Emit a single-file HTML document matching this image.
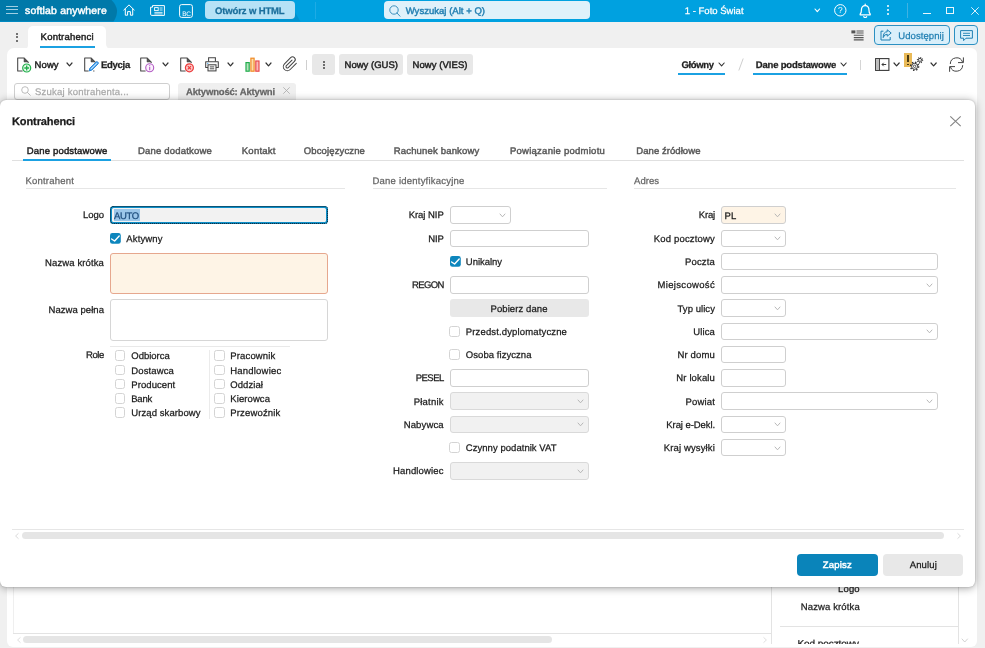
<!DOCTYPE html><html lang="pl"><head><meta charset="utf-8"><title>Kontrahenci</title><style>
*{box-sizing:border-box;margin:0;padding:0}
html,body{width:985px;height:648px;overflow:hidden;background:#f0f0f0}
body{font-family:"Liberation Sans",sans-serif;font-size:10px;line-height:12px;color:#222;letter-spacing:-0.1px;position:relative;text-rendering:geometricPrecision}
#root{position:absolute;left:0;top:0;width:985px;height:648px;overflow:hidden;will-change:transform;-webkit-font-smoothing:antialiased}
.a{position:absolute}
.t{position:absolute;white-space:nowrap;line-height:12px;-webkit-text-stroke:0.25px currentColor}
.m{-webkit-text-stroke:0.45px currentColor}
.b{font-weight:700}
.r{text-align:right}
.inp{position:absolute;border:1px solid #cfcfcf;border-radius:3px;background:#fff;height:18px}
.dis{background:#f1f1f1;border-color:#d9d9d9}
.cb{position:absolute;width:11px;height:11px;border:1px solid #d4d4d4;border-radius:2.5px;background:#fff}
.cbc{position:absolute;width:11px;height:11px;border-radius:2px;background:#0d86bd}
.btn{position:absolute;background:#e8e8e8;border-radius:3px}
svg{position:absolute;overflow:visible}
.ln{position:absolute;height:1px;background:#e3e3e3}
</style></head><body><div id="root">
<div class="a" style="left:0;top:0;width:985px;height:21.5px;background:#00a1e0"></div>
<svg style="left:0;top:0" width="302" height="21.5" viewBox="0 0 302 21.5"><path d="M0 0 H293 V9 L300.5 21.5 H0 Z" fill="#0093cf"/></svg>
<svg style="left:0;top:0" width="120" height="21.5" viewBox="0 0 120 21.5"><path d="M0 0 H111.5 Q116.5 5 117 10.5 Q117.3 16 113.5 21.5 H0 Z" fill="#0079a9"/></svg>
<div class="a" style="left:5.5px;top:5.7px;width:12px;height:1.2px;background:#9fcfe3"></div>
<div class="a" style="left:5.5px;top:9.200000000000001px;width:12px;height:1.2px;background:#9fcfe3"></div>
<div class="a" style="left:5.5px;top:12.6px;width:12px;height:1.2px;background:#9fcfe3"></div>
<div class="t m" style="top:6px;left:25.00px;font-size:10.45px;letter-spacing:0.196px;color:#fff;">softlab anywhere</div>
<svg style="left:123px;top:4px" width="12" height="12" viewBox="0 0 12 12"><path d="M0.8 6 L6 0.9 L11.2 6 M2.3 5 V11.2 H4.6 V7.6 H7.4 V11.2 H9.7 V5" fill="none" stroke="#fff" stroke-width="1" stroke-linejoin="round" stroke-linecap="round"/></svg>
<svg style="left:150px;top:5px" width="15" height="11" viewBox="0 0 15 11"><path d="M2.5 0.6 H14.4 V10.4 H1.8 Q0.6 10.4 0.6 9.2 V2.2 H2.5 Z" fill="none" stroke="#fff" stroke-width="1"/><rect x="4.6" y="2.6" width="3.6" height="3" fill="none" stroke="#fff" stroke-width="0.9"/><path d="M9.6 3 H12.6 M9.6 5 H12.6 M4.4 7.4 H12.6 M4.4 8.9 H12.6" stroke="#fff" stroke-width="0.8"/></svg>
<svg style="left:179px;top:4px" width="14" height="14" viewBox="0 0 14 14"><rect x="0.6" y="0.6" width="12.8" height="12.8" rx="2" fill="none" stroke="#fff" stroke-width="1"/><text x="3.2" y="11.5" font-size="6.5" fill="#fff" font-family="Liberation Sans, sans-serif" letter-spacing="-0.3">BC</text></svg>
<div class="a" style="left:205px;top:1px;width:89.6px;height:18px;background:#b6e2f6;border-radius:4px"></div>
<div class="t b" style="top:6px;left:215.00px;font-size:9.5px;letter-spacing:-0.132px;color:#1b6f9c;">Otwórz w HTML</div>
<div class="a" style="left:315px;top:2px;width:1px;height:17px;background:#1eabe5"></div>
<div class="a" style="left:384px;top:1px;width:206px;height:18px;background:#dff1fa;border-radius:4px"></div>
<svg style="left:389px;top:4.5px" width="12" height="12" viewBox="0 0 12 12"><circle cx="5" cy="5" r="4.2" fill="none" stroke="#2a86b5" stroke-width="0.9"/><path d="M8 8 L11 11.2" stroke="#2a86b5" stroke-width="0.9" stroke-linecap="round"/></svg>
<div class="t m" style="top:6px;left:405.70px;font-size:9.5px;letter-spacing:0.030px;color:#2581b3;">Wyszukaj (Alt + Q)</div>
<div class="t " style="top:6px;left:684.70px;font-size:9.5px;letter-spacing:0.021px;color:#fff;">1 - Foto Świat</div>
<svg style="left:814.70px;top:9.05px" width="4.6" height="2.7" viewBox="0 0 4.6 2.7"><path d="M0 0 L2.3 2.7 L4.6 0" fill="none" stroke="#fff" stroke-width="1.15" stroke-linecap="round" stroke-linejoin="round"/></svg>
<svg style="left:834.2px;top:4.2px" width="12.6" height="12.6" viewBox="0 0 12.6 12.6"><circle cx="6.3" cy="6.3" r="5.7" fill="none" stroke="#fff" stroke-width="1"/><text x="3.9" y="9.4" font-size="8.4" fill="#fff" font-family="Liberation Sans, sans-serif">?</text></svg>
<svg style="left:859.3px;top:2.6px" width="12.4" height="16.8" viewBox="0 0 11 15"><path d="M1 10.6 H10 V9.8 Q8.9 9 8.9 6.4 Q8.9 2.4 5.5 2.4 Q2.1 2.4 2.1 6.4 Q2.1 9 1 9.8 Z" fill="none" stroke="#fff" stroke-width="1.1" stroke-linejoin="round"/><path d="M5.5 2.2 V1" stroke="#fff" stroke-width="1.1" stroke-linecap="round"/><path d="M4.2 12.3 Q5.5 13.6 6.8 12.3" fill="none" stroke="#fff" stroke-width="1.1" stroke-linecap="round"/></svg>
<div class="a" style="left:887.3px;top:5.199999999999999px;width:2.2px;height:2.2px;border-radius:1.1px;background:#fff"></div>
<div class="a" style="left:887.3px;top:9.200000000000001px;width:2.2px;height:2.2px;border-radius:1.1px;background:#fff"></div>
<div class="a" style="left:887.3px;top:13.200000000000001px;width:2.2px;height:2.2px;border-radius:1.1px;background:#fff"></div>
<div class="a" style="left:906.5px;top:3px;width:1px;height:15px;background:#3fb2e3"></div>
<div class="a" style="left:922.5px;top:12.6px;width:8px;height:1px;background:#e8f6fc"></div>
<div class="a" style="left:946px;top:6.5px;width:8px;height:7.5px;border:1px solid #e8f6fc"></div>
<svg style="left:971px;top:6.5px" width="8" height="8" viewBox="0 0 8 8"><path d="M0.3 0.3 L7.7 7.7 M7.7 0.3 L0.3 7.7" stroke="#e8f6fc" stroke-width="0.95"/></svg>
<div class="a" style="left:15.6px;top:32.6px;width:2px;height:2px;border-radius:1px;background:#4a4a4a"></div>
<div class="a" style="left:15.6px;top:36.25px;width:2px;height:2px;border-radius:1px;background:#4a4a4a"></div>
<div class="a" style="left:15.6px;top:39.9px;width:2px;height:2px;border-radius:1px;background:#4a4a4a"></div>
<div class="a" style="left:28px;top:25.5px;width:78px;height:23px;background:#fff;border-radius:5px 5px 0 0"></div>
<div class="a" style="left:106px;top:43px;width:6px;height:6px;background:#fff"></div><div class="a" style="left:106px;top:38px;width:12px;height:10.6px;background:#f0f0f0;border-radius:0 0 0 5px"></div>
<div class="a" style="left:23px;top:44px;width:5px;height:5px;background:#fff"></div><div class="a" style="left:20px;top:43px;width:8px;height:5.6px;background:#f0f0f0;border-radius:0 0 4px 0"></div>
<div class="t m" style="top:32px;left:40.60px;font-size:9.5px;letter-spacing:0.243px;color:#222;">Kontrahenci</div>
<div class="a" style="left:39.5px;top:45.7px;width:55.5px;height:2px;background:#1ba1e2"></div>
<svg style="left:851px;top:29.5px" width="13" height="11" viewBox="0 0 13 11"><rect x="0.4" y="0.4" width="4" height="3" fill="#555"/><path d="M5.5 1 H12.6 M5.5 3 H12.6 M2.8 5.3 H12.6 M2.8 7.6 H12.6 M2.8 9.9 H12.6" stroke="#555" stroke-width="1.1"/></svg>
<div class="a" style="left:873.7px;top:25px;width:76.2px;height:19.8px;background:#d9effa;border:1px solid #2b90c2;border-radius:4px"></div>
<svg style="left:879.5px;top:29px" width="12" height="12" viewBox="0 0 12 12"><path d="M3.4 2.2 H1 V11 H10.2 V8" fill="none" stroke="#1f7fb2" stroke-width="1"/><path d="M7.2 0.8 L11.2 4 L7.2 7.2 V5.2 Q4.2 5.2 3.2 8.6 Q3.2 2.8 7.2 2.8 Z" fill="none" stroke="#1f7fb2" stroke-width="1" stroke-linejoin="round"/></svg>
<div class="t " style="top:31px;left:898.30px;font-size:9.5px;letter-spacing:0.067px;color:#1f7fb2;">Udostępnij</div>
<div class="a" style="left:954.2px;top:25px;width:23.6px;height:19.8px;background:#d9effa;border:1px solid #2b90c2;border-radius:4px"></div>
<svg style="left:959.5px;top:29.5px" width="13" height="12" viewBox="0 0 13 12"><path d="M0.6 0.6 H12.4 V8.2 H6 L3.6 10.6 V8.2 H0.6 Z" fill="none" stroke="#1f7fb2" stroke-width="1" stroke-linejoin="round"/><path d="M3 3.3 H10 M3 5.5 H10" stroke="#1f7fb2" stroke-width="0.9"/></svg>
<div class="a" style="left:7px;top:48.3px;width:970.2px;height:598.3px;background:#fff;border-radius:7px 6px 6px 6px"></div>
<svg style="left:16.8px;top:56.8px" width="16" height="16" viewBox="0 0 16 16"><path d="M5.6 13.9 H0.7 V0.9 H7 L11.2 5.1 V6" fill="none" stroke="#444" stroke-width="1.05" stroke-linejoin="round"/><path d="M7 1.2 V5 H10.8 Z" fill="#555" stroke="#444" stroke-width="0.5" stroke-linejoin="round"/><circle cx="9.7" cy="11" r="4" fill="#e9f8ec" stroke="#21b04b" stroke-width="1.2"/><path d="M9.7 8.6 V13.4 M7.3 11 H12.1" stroke="#21b04b" stroke-width="1.3"/></svg>
<div class="t m" style="top:60px;left:34.50px;font-size:9.5px;letter-spacing:0.122px;color:#222;">Nowy</div>
<svg style="left:67.00px;top:63.00px" width="5" height="2.8" viewBox="0 0 5 2.8"><path d="M0 0 L2.5 2.8 L5 0" fill="none" stroke="#333" stroke-width="1.2" stroke-linecap="round" stroke-linejoin="round"/></svg>
<svg style="left:83.8px;top:56.8px" width="16" height="16" viewBox="0 0 16 16"><path d="M4.6 13.9 H0.7 V0.9 H7 L11.2 5.1 V5.6 M9.2 13.9 H10.4" fill="none" stroke="#444" stroke-width="1.05" stroke-linejoin="round"/><path d="M7 1.2 V5 H10.8 Z" fill="#555" stroke="#444" stroke-width="0.5" stroke-linejoin="round"/><path d="M5.2 13.9 L5.9 11.2 L12.2 4.9 Q12.9 4.3 13.6 4.9 L14.1 5.4 Q14.7 6.1 14.1 6.8 L7.8 13.1 Z" fill="#5fb0f0" stroke="#2583da" stroke-width="1" stroke-linejoin="round"/><path d="M7 12 L12.8 6.2" stroke="#d7ecff" stroke-width="0.8"/></svg>
<div class="t b" style="top:60px;left:101.00px;font-size:9.5px;letter-spacing:-0.272px;color:#222;">Edycja</div>
<svg style="left:139.8px;top:56.8px" width="16" height="16" viewBox="0 0 16 16"><path d="M5.6 13.9 H0.7 V0.9 H7 L11.2 5.1 V6" fill="none" stroke="#444" stroke-width="1.05" stroke-linejoin="round"/><path d="M7 1.2 V5 H10.8 Z" fill="#555" stroke="#444" stroke-width="0.5" stroke-linejoin="round"/><circle cx="9.7" cy="10.8" r="4" fill="#fbf0fd" stroke="#b35cc4" stroke-width="1.1"/><path d="M9.7 8.3 V9.2 M9.7 10 V13.3" stroke="#b35cc4" stroke-width="1.1"/></svg>
<svg style="left:162.60px;top:63.00px" width="5" height="2.8" viewBox="0 0 5 2.8"><path d="M0 0 L2.5 2.8 L5 0" fill="none" stroke="#333" stroke-width="1.2" stroke-linecap="round" stroke-linejoin="round"/></svg>
<svg style="left:179.7px;top:56.8px" width="16" height="16" viewBox="0 0 16 16"><path d="M5.6 13.9 H0.7 V0.9 H7 L11.2 5.1 V6" fill="none" stroke="#444" stroke-width="1.05" stroke-linejoin="round"/><path d="M7 1.2 V5 H10.8 Z" fill="#555" stroke="#444" stroke-width="0.5" stroke-linejoin="round"/><circle cx="9.4" cy="10.8" r="4" fill="#fcc9c9" stroke="#ec3b3b" stroke-width="1.2"/><path d="M7.8 9.2 L11 12.4 M11 9.2 L7.8 12.4" stroke="#ec3b3b" stroke-width="1.2"/></svg>
<svg style="left:205px;top:57.2px" width="14" height="14.6" viewBox="0 0 14 14.6"><path d="M3.6 4.6 V0.7 H10.4 V4.6" fill="none" stroke="#444" stroke-width="1.05"/><path d="M3 10.6 H0.7 V4.8 H13.3 V10.6 H11" fill="none" stroke="#444" stroke-width="1.05" stroke-linejoin="round"/><rect x="3" y="7.8" width="8" height="6.1" fill="#fff" stroke="#444" stroke-width="1.05"/><path d="M4.8 9.9 H9.2 M4.8 11.8 H9.2" stroke="#3a3a3a" stroke-width="0.9"/><rect x="2" y="5.8" width="1.4" height="1.2" fill="#6bb8f0"/></svg>
<svg style="left:227.50px;top:63.00px" width="5" height="2.8" viewBox="0 0 5 2.8"><path d="M0 0 L2.5 2.8 L5 0" fill="none" stroke="#333" stroke-width="1.2" stroke-linecap="round" stroke-linejoin="round"/></svg>
<svg style="left:245.4px;top:57px" width="15.2" height="15" viewBox="0 0 15.2 15"><rect x="1" y="5.6" width="3.2" height="8.6" fill="#b7e3c0" stroke="#22ad4c" stroke-width="1.2"/><rect x="5.9" y="1.2" width="3.2" height="13" fill="#fcdcaa" stroke="#f08a24" stroke-width="1.2"/><rect x="10.8" y="4" width="3.2" height="10.2" fill="#f9b9b9" stroke="#ea4a4a" stroke-width="1.2"/></svg>
<svg style="left:265.50px;top:63.00px" width="5" height="2.8" viewBox="0 0 5 2.8"><path d="M0 0 L2.5 2.8 L5 0" fill="none" stroke="#333" stroke-width="1.2" stroke-linecap="round" stroke-linejoin="round"/></svg>
<svg style="left:281.6px;top:56.4px" width="16" height="16" viewBox="0 0 24 24"><path d="M21.44 11.05l-9.19 9.19a6 6 0 0 1-8.49-8.49l9.19-9.19a4 4 0 0 1 5.66 5.66l-9.2 9.19a2 2 0 0 1-2.83-2.83l8.49-8.48" fill="none" stroke="#444" stroke-width="1.55" stroke-linecap="round" stroke-linejoin="round"/></svg>
<div class="a" style="left:305.8px;top:60px;width:1px;height:9.5px;background:#cfcfcf"></div>
<div class="btn" style="left:312px;top:54px;width:23px;height:21px"></div>
<div class="a" style="left:322.5px;top:60.5px;width:2px;height:2px;border-radius:1px;background:#444"></div>
<div class="a" style="left:322.5px;top:63.900000000000006px;width:2px;height:2px;border-radius:1px;background:#444"></div>
<div class="a" style="left:322.5px;top:67.3px;width:2px;height:2px;border-radius:1px;background:#444"></div>
<div class="btn" style="left:339px;top:54px;width:64.3px;height:21px"></div>
<div class="t m" style="top:60px;left:344.50px;font-size:9.5px;letter-spacing:0.021px;color:#222;">Nowy (GUS)</div>
<div class="btn" style="left:407.3px;top:54px;width:65.7px;height:21px"></div>
<div class="t m" style="top:60px;left:412.50px;font-size:9.5px;letter-spacing:0.060px;color:#222;">Nowy (VIES)</div>
<div class="t b" style="top:60px;left:681.50px;font-size:9.5px;letter-spacing:-0.378px;color:#222;">Główny</div>
<svg style="left:718.60px;top:62.85px" width="5.2" height="2.9" viewBox="0 0 5.2 2.9"><path d="M0 0 L2.6 2.9 L5.2 0" fill="none" stroke="#333" stroke-width="1.1" stroke-linecap="round" stroke-linejoin="round"/></svg>
<div class="a" style="left:678px;top:73.2px;width:47px;height:1.6px;background:#1ba1e2"></div>
<svg style="left:737.5px;top:58px" width="6" height="13" viewBox="0 0 6 13"><path d="M5.2 0.5 L0.8 12.5" stroke="#c8c8c8" stroke-width="0.9"/></svg>
<div class="t b" style="top:60px;left:755.70px;font-size:9.5px;letter-spacing:-0.168px;color:#222;">Dane podstawowe</div>
<svg style="left:841.10px;top:62.85px" width="5.2" height="2.9" viewBox="0 0 5.2 2.9"><path d="M0 0 L2.6 2.9 L5.2 0" fill="none" stroke="#333" stroke-width="1.1" stroke-linecap="round" stroke-linejoin="round"/></svg>
<div class="a" style="left:753.4px;top:73.2px;width:94px;height:1.6px;background:#1ba1e2"></div>
<div class="a" style="left:860px;top:60px;width:1px;height:9.5px;background:#d5d5d5"></div>
<svg style="left:874.5px;top:58px" width="14.5" height="13" viewBox="0 0 14.5 13"><rect x="0.6" y="0.6" width="13.3" height="11.8" fill="none" stroke="#3a3a3a" stroke-width="1.1"/><rect x="1.1" y="1.1" width="3.2" height="10.8" fill="#bdbdbd"/><path d="M4.5 0.6 V12.4" stroke="#3a3a3a" stroke-width="0.9"/><path d="M11.2 6.5 H7 M8.7 4.8 L7 6.5 L8.7 8.2" fill="none" stroke="#3a3a3a" stroke-width="1"/></svg>
<svg style="left:893.80px;top:62.85px" width="5.2" height="2.9" viewBox="0 0 5.2 2.9"><path d="M0 0 L2.6 2.9 L5.2 0" fill="none" stroke="#333" stroke-width="1.2" stroke-linecap="round" stroke-linejoin="round"/></svg>
<div class="a" style="left:904.1px;top:53.1px;width:8.1px;height:13.8px;background:#e9ba58"></div>
<div class="a" style="left:907.3px;top:54.7px;width:2.1px;height:7.7px;background:#4a3a12"></div><div class="a" style="left:907.3px;top:63.5px;width:2.1px;height:1.9px;background:#4a3a12"></div>
<svg style="left:908px;top:56px" width="17" height="17" viewBox="0 0 17 17"><circle cx="6.6" cy="10.3" r="4" fill="none" stroke="#333" stroke-width="1.5" stroke-dasharray="1.4 1.74"/><circle cx="6.6" cy="10.3" r="3" fill="#fff" stroke="#333" stroke-width="1"/><circle cx="6.6" cy="10.3" r="1.2" fill="none" stroke="#333" stroke-width="0.8"/><circle cx="12" cy="4.2" r="2.6" fill="none" stroke="#333" stroke-width="1.2" stroke-dasharray="0.9 1.14"/><circle cx="12" cy="4.2" r="1.8" fill="#fff" stroke="#333" stroke-width="0.9"/><circle cx="12" cy="4.2" r="0.5" fill="#333"/></svg>
<svg style="left:931.10px;top:62.85px" width="5.2" height="2.9" viewBox="0 0 5.2 2.9"><path d="M0 0 L2.6 2.9 L5.2 0" fill="none" stroke="#333" stroke-width="1.2" stroke-linecap="round" stroke-linejoin="round"/></svg>
<svg style="left:948.8px;top:57px" width="15" height="15" viewBox="0 0 15 15"><path d="M1.3 7 A6.3 6.3 0 0 1 13.6 5.2" fill="none" stroke="#444" stroke-width="1"/><path d="M14.4 0.4 V5.6 H9" fill="none" stroke="#444" stroke-width="1"/><path d="M13.7 8.2 A6.3 6.3 0 0 1 1.4 9.8" fill="none" stroke="#444" stroke-width="1"/><path d="M0.6 14.8 V9.6 H6" fill="none" stroke="#444" stroke-width="1"/></svg>
<div class="a" style="left:13.5px;top:82.5px;width:156px;height:17px;border:1px solid #cfcfcf;border-radius:3px;background:#fff"></div>
<svg style="left:21px;top:86px" width="10" height="10" viewBox="0 0 10 10"><circle cx="4" cy="4" r="3.3" fill="none" stroke="#b5b5b5" stroke-width="0.9"/><path d="M6.4 6.4 L9.3 9.3" stroke="#b5b5b5" stroke-width="0.9" stroke-linecap="round"/></svg>
<div class="t " style="top:87px;left:35.00px;font-size:9.5px;letter-spacing:0.224px;color:#ababab;">Szukaj kontrahenta...</div>
<div class="a" style="left:178px;top:82.5px;width:118px;height:17.5px;background:#efefef;border-radius:3px 3px 0 0"></div>
<div class="t b" style="top:87px;left:186.00px;font-size:9.5px;letter-spacing:-0.171px;color:#666;">Aktywność: Aktywni</div>
<svg style="left:282.5px;top:87.3px" width="7" height="7" viewBox="0 0 7 7"><path d="M0.3 0.3 L6.7 6.7 M6.7 0.3 L0.3 6.7" stroke="#aaa" stroke-width="0.8"/></svg>
<div class="a" style="left:13px;top:560px;width:1px;height:74px;background:#efefef"></div>
<div class="a" style="left:13px;top:633.3px;width:758px;height:1px;background:#e3e3e3"></div>
<svg style="left:16.5px;top:636.5px" width="4" height="6" viewBox="0 0 4 6"><path d="M3.5 0.3 L0.6 3 L3.5 5.7" fill="none" stroke="#d5d5d5" stroke-width="0.8"/></svg>
<div class="a" style="left:23px;top:636px;width:529px;height:6.5px;border-radius:3.5px;background:#e5e5e5"></div>
<svg style="left:762.5px;top:636.5px" width="4" height="6" viewBox="0 0 4 6"><path d="M0.5 0.3 L3.4 3 L0.5 5.7" fill="none" stroke="#d5d5d5" stroke-width="0.8"/></svg>
<div class="a" style="left:770.5px;top:560px;width:1px;height:84px;background:#e3e3e3"></div>
<div class="a" style="left:958px;top:560px;width:1px;height:84px;background:#e3e3e3"></div>
<div class="t " style="top:584px;right:125.20px;font-size:9.5px;letter-spacing:0.177px;color:#222">Logo</div>
<div class="t " style="top:602px;right:125.20px;font-size:9.5px;letter-spacing:0.121px;color:#222;">Nazwa krótka</div>
<div class="a" style="left:780px;top:626.3px;width:178px;height:1px;background:#e3e3e3"></div>
<div class="a" style="left:780px;top:638px;width:100px;height:6px;overflow:hidden"><div class="t" style="left:17.5px;top:1px;color:#222;letter-spacing:-0.08px">Kod pocztowy</div></div>
<svg style="left:961.95px;top:638.50px" width="5.5" height="3" viewBox="0 0 5.5 3"><path d="M0 0 L2.75 3 L5.5 0" fill="none" stroke="#ccc" stroke-width="0.9" stroke-linecap="round" stroke-linejoin="round"/></svg>
<div class="a" style="left:0;top:100px;width:975.3px;height:486.8px;background:#fff;border-radius:6px;box-shadow:0 1px 9px rgba(0,0,0,0.38),0 0 2px rgba(0,0,0,0.2)"></div>
<div class="t b" style="top:116px;left:12.00px;font-size:11.02px;letter-spacing:-0.113px;color:#1a1a1a;">Kontrahenci</div>
<svg style="left:949.7px;top:116px" width="11" height="10.5" viewBox="0 0 11 10.5"><path d="M0.3 0.3 L10.7 10.2 M10.7 0.3 L0.3 10.2" stroke="#858585" stroke-width="1.15"/></svg>
<div class="ln" style="left:12px;top:160px;width:951.5px;background:#e0e0e0"></div>
<div class="a" style="left:23px;top:159px;width:88px;height:2px;background:#1ba1e2"></div>
<div class="t m" style="top:146px;left:26.75px;font-size:9.5px;letter-spacing:0.174px;color:#222;">Dane podstawowe</div>
<div class="t m" style="top:146px;left:138.00px;font-size:9.5px;letter-spacing:0.188px;color:#595959;">Dane dodatkowe</div>
<div class="t m" style="top:146px;left:241.75px;font-size:9.5px;letter-spacing:0.253px;color:#595959;">Kontakt</div>
<div class="t m" style="top:146px;left:303.75px;font-size:9.5px;letter-spacing:0.132px;color:#595959;">Obcojęzyczne</div>
<div class="t m" style="top:146px;left:393.75px;font-size:9.5px;letter-spacing:0.172px;color:#595959;">Rachunek bankowy</div>
<div class="t m" style="top:146px;left:510.00px;font-size:9.5px;letter-spacing:0.250px;color:#595959;">Powiązanie podmiotu</div>
<div class="t m" style="top:146px;left:636.25px;font-size:9.5px;letter-spacing:0.067px;color:#595959;">Dane źródłowe</div>
<div class="t " style="top:176px;left:25.50px;font-size:9.5px;letter-spacing:0.205px;color:#666;">Kontrahent</div>
<div class="ln" style="left:25.5px;top:188px;width:319.5px;background:#e6e6e6"></div>
<div class="t " style="top:176px;left:372.50px;font-size:9.5px;letter-spacing:0.220px;color:#666;">Dane identyfikacyjne</div>
<div class="ln" style="left:372.5px;top:188px;width:234.5px;background:#e6e6e6"></div>
<div class="t " style="top:176px;left:634.00px;font-size:9.5px;letter-spacing:0.039px;color:#666;">Adres</div>
<div class="ln" style="left:634px;top:188px;width:322px;background:#e6e6e6"></div>
<div class="t " style="top:210px;right:881.00px;font-size:9.5px;letter-spacing:-0.035px;color:#1a1a1a">Logo</div>
<div class="a" style="left:110px;top:206px;width:218px;height:18px;border:2px solid #0e8fc8;border-radius:3.5px;background:#f2f2f2;outline:1px dotted #0a1a24;outline-offset:-1px"></div>
<div class="a" style="left:114px;top:209.1px;width:25.6px;height:11.6px;background:#9cc7ea"></div>
<div class="t " style="top:211px;left:114.10px;font-size:9.5px;letter-spacing:-0.355px;color:#1d4d7d">AUTO</div>
<svg style="left:110.20px;top:232.92px" width="10.8" height="10.8" viewBox="0 0 10.8 10.8"><rect x="0" y="0" width="10.8" height="10.8" rx="2.4" fill="#0d86bd"/><path d="M1.6 6 L4.6 8 L9.2 3" fill="none" stroke="#fff" stroke-width="1.4" stroke-linecap="round" stroke-linejoin="round"/></svg>
<div class="t " style="top:234px;left:126.30px;font-size:9.5px;letter-spacing:0.125px;color:#1a1a1a">Aktywny</div>
<div class="a" style="left:110px;top:253px;width:218px;height:41px;border:1px solid #e6a78e;border-radius:3px;background:#fef4e6"></div>
<div class="t " style="top:258px;right:881.00px;font-size:9.5px;letter-spacing:0.120px;color:#1a1a1a">Nazwa krótka</div>
<div class="a" style="left:110px;top:299px;width:218px;height:41.5px;border:1px solid #d6d6d6;border-radius:3px;background:#fff"></div>
<div class="t " style="top:305px;right:881.00px;font-size:9.5px;letter-spacing:0.053px;color:#1a1a1a">Nazwa pełna</div>
<div class="t " style="top:350px;right:881.00px;font-size:9.5px;letter-spacing:-0.387px;color:#1a1a1a">Role</div>
<div class="ln" style="left:110px;top:346px;width:180px;background:#e9e9e9"></div>
<div class="a" style="left:209.3px;top:350px;width:1px;height:69px;background:#ebebeb"></div>
<div class="cb" style="left:114.6px;top:350.10px;width:10.8px;height:10.6px"></div>
<div class="t " style="top:351px;left:131.30px;font-size:9.5px;letter-spacing:-0.020px;color:#1a1a1a">Odbiorca</div>
<div class="cb" style="left:214px;top:350.10px;width:10.8px;height:10.6px"></div>
<div class="t " style="top:351px;left:230.30px;font-size:9.5px;letter-spacing:0.141px;color:#1a1a1a">Pracownik</div>
<div class="cb" style="left:114.6px;top:364.90px;width:10.8px;height:10.6px"></div>
<div class="t " style="top:366px;left:131.30px;font-size:9.5px;letter-spacing:0.110px;color:#1a1a1a">Dostawca</div>
<div class="cb" style="left:214px;top:364.90px;width:10.8px;height:10.6px"></div>
<div class="t " style="top:366px;left:230.30px;font-size:9.5px;letter-spacing:0.198px;color:#1a1a1a">Handlowiec</div>
<div class="cb" style="left:114.6px;top:378.90px;width:10.8px;height:10.6px"></div>
<div class="t " style="top:380px;left:131.30px;font-size:9.5px;letter-spacing:0.076px;color:#1a1a1a">Producent</div>
<div class="cb" style="left:214px;top:378.90px;width:10.8px;height:10.6px"></div>
<div class="t " style="top:380px;left:230.30px;font-size:9.5px;letter-spacing:0.069px;color:#1a1a1a">Oddział</div>
<div class="cb" style="left:114.6px;top:393.10px;width:10.8px;height:10.6px"></div>
<div class="t " style="top:394px;left:131.30px;font-size:9.5px;letter-spacing:-0.264px;color:#1a1a1a">Bank</div>
<div class="cb" style="left:214px;top:393.10px;width:10.8px;height:10.6px"></div>
<div class="t " style="top:394px;left:230.30px;font-size:9.5px;letter-spacing:0.090px;color:#1a1a1a">Kierowca</div>
<div class="cb" style="left:114.6px;top:407.00px;width:10.8px;height:10.6px"></div>
<div class="t " style="top:408px;left:131.30px;font-size:9.5px;letter-spacing:0.085px;color:#1a1a1a">Urząd skarbowy</div>
<div class="cb" style="left:214px;top:407.00px;width:10.8px;height:10.6px"></div>
<div class="t " style="top:408px;left:230.30px;font-size:9.5px;letter-spacing:0.152px;color:#1a1a1a">Przewoźnik</div>
<div class="t " style="top:210px;right:541.30px;font-size:9.5px;letter-spacing:-0.047px;color:#1a1a1a">Kraj NIP</div>
<div class="inp " style="left:449.5px;top:206.25px;width:61.3px;height:17.5px;"></div>
<svg style="left:500.30px;top:213.85px" width="5" height="2.8" viewBox="0 0 5 2.8"><path d="M0 0 L2.5 2.8 L5 0" fill="none" stroke="#b0b0b0" stroke-width="0.9" stroke-linecap="round" stroke-linejoin="round"/></svg>
<div class="t " style="top:234px;right:541.30px;font-size:9.5px;letter-spacing:-0.115px;color:#1a1a1a">NIP</div>
<div class="inp " style="left:449.5px;top:229.52px;width:139px;height:17.5px;"></div>
<svg style="left:449.70px;top:256.19px" width="10.8" height="10.8" viewBox="0 0 10.8 10.8"><rect x="0" y="0" width="10.8" height="10.8" rx="2.4" fill="#0d86bd"/><path d="M1.6 6 L4.6 8 L9.2 3" fill="none" stroke="#fff" stroke-width="1.4" stroke-linecap="round" stroke-linejoin="round"/></svg>
<div class="t " style="top:257px;left:465.80px;font-size:9.5px;letter-spacing:-0.023px;color:#1a1a1a">Unikalny</div>
<div class="t " style="top:280px;right:541.30px;font-size:9.5px;letter-spacing:-0.629px;color:#1a1a1a">REGON</div>
<div class="inp " style="left:449.5px;top:276.06px;width:139px;height:17.5px;"></div>
<div class="btn" style="left:449.5px;top:299.33px;width:139px;height:17.5px"></div>
<div class="t " style="top:304px;left:490.50px;font-size:9.5px;letter-spacing:0.086px;color:#1a1a1a;">Pobierz dane</div>
<div class="cb" style="left:449px;top:326px"></div>
<div class="t " style="top:327px;left:465.80px;font-size:9.5px;letter-spacing:0.144px;color:#1a1a1a">Przedst.dyplomatyczne</div>
<div class="cb" style="left:449px;top:349px"></div>
<div class="t " style="top:350px;left:465.80px;font-size:9.5px;letter-spacing:0.057px;color:#1a1a1a">Osoba fizyczna</div>
<div class="t " style="top:373px;right:541.30px;font-size:9.5px;letter-spacing:-0.528px;color:#1a1a1a">PESEL</div>
<div class="inp " style="left:449.5px;top:369.14px;width:139px;height:17.5px;"></div>
<div class="t " style="top:397px;right:541.30px;font-size:9.5px;letter-spacing:0.212px;color:#1a1a1a">Płatnik</div>
<div class="inp dis" style="left:449.5px;top:392.41px;width:139px;height:17.5px;"></div>
<svg style="left:578.00px;top:400.01px" width="5" height="2.8" viewBox="0 0 5 2.8"><path d="M0 0 L2.5 2.8 L5 0" fill="none" stroke="#b0b0b0" stroke-width="0.9" stroke-linecap="round" stroke-linejoin="round"/></svg>
<div class="t " style="top:420px;right:541.30px;font-size:9.5px;letter-spacing:0.132px;color:#1a1a1a">Nabywca</div>
<div class="inp dis" style="left:449.5px;top:415.68px;width:139px;height:17.5px;"></div>
<svg style="left:578.00px;top:423.28px" width="5" height="2.8" viewBox="0 0 5 2.8"><path d="M0 0 L2.5 2.8 L5 0" fill="none" stroke="#b0b0b0" stroke-width="0.9" stroke-linecap="round" stroke-linejoin="round"/></svg>
<div class="cb" style="left:449px;top:442px"></div>
<div class="t " style="top:443px;left:465.80px;font-size:9.5px;letter-spacing:0.042px;color:#1a1a1a">Czynny podatnik VAT</div>
<div class="t " style="top:466px;right:541.30px;font-size:9.5px;letter-spacing:0.158px;color:#1a1a1a">Handlowiec</div>
<div class="inp dis" style="left:449.5px;top:462.22px;width:139px;height:17.5px;"></div>
<svg style="left:578.00px;top:469.82px" width="5" height="2.8" viewBox="0 0 5 2.8"><path d="M0 0 L2.5 2.8 L5 0" fill="none" stroke="#b0b0b0" stroke-width="0.9" stroke-linecap="round" stroke-linejoin="round"/></svg>
<div class="t " style="top:210px;right:270.00px;font-size:9.5px;letter-spacing:-0.164px;color:#1a1a1a">Kraj</div>
<div class="inp " style="left:720.5px;top:206.25px;width:65px;height:17.5px;background:#fef4e6"></div>
<svg style="left:775.00px;top:213.85px" width="5" height="2.8" viewBox="0 0 5 2.8"><path d="M0 0 L2.5 2.8 L5 0" fill="none" stroke="#b0b0b0" stroke-width="0.9" stroke-linecap="round" stroke-linejoin="round"/></svg>
<div class="t " style="top:211px;left:724.50px;font-size:9.5px;letter-spacing:0.205px;color:#1a1a1a">PL</div>
<div class="t " style="top:234px;right:270.00px;font-size:9.5px;letter-spacing:0.174px;color:#1a1a1a">Kod pocztowy</div>
<div class="inp " style="left:720.5px;top:229.52px;width:65px;height:17.5px;"></div>
<svg style="left:775.00px;top:237.12px" width="5" height="2.8" viewBox="0 0 5 2.8"><path d="M0 0 L2.5 2.8 L5 0" fill="none" stroke="#b0b0b0" stroke-width="0.9" stroke-linecap="round" stroke-linejoin="round"/></svg>
<div class="t " style="top:257px;right:270.00px;font-size:9.5px;letter-spacing:0.159px;color:#1a1a1a">Poczta</div>
<div class="inp " style="left:720.5px;top:252.79px;width:217.3px;height:17.5px;"></div>
<div class="t " style="top:280px;right:270.00px;font-size:9.5px;letter-spacing:0.331px;color:#1a1a1a">Miejscowość</div>
<div class="inp " style="left:720.5px;top:276.06px;width:217.3px;height:17.5px;"></div>
<svg style="left:927.30px;top:283.66px" width="5" height="2.8" viewBox="0 0 5 2.8"><path d="M0 0 L2.5 2.8 L5 0" fill="none" stroke="#b0b0b0" stroke-width="0.9" stroke-linecap="round" stroke-linejoin="round"/></svg>
<div class="t " style="top:304px;right:270.00px;font-size:9.5px;letter-spacing:0.059px;color:#1a1a1a">Typ ulicy</div>
<div class="inp " style="left:720.5px;top:299.33px;width:65px;height:17.5px;"></div>
<svg style="left:775.00px;top:306.93px" width="5" height="2.8" viewBox="0 0 5 2.8"><path d="M0 0 L2.5 2.8 L5 0" fill="none" stroke="#b0b0b0" stroke-width="0.9" stroke-linecap="round" stroke-linejoin="round"/></svg>
<div class="t " style="top:327px;right:270.00px;font-size:9.5px;letter-spacing:0.115px;color:#1a1a1a">Ulica</div>
<div class="inp " style="left:720.5px;top:322.60px;width:217.3px;height:17.5px;"></div>
<svg style="left:927.30px;top:330.20px" width="5" height="2.8" viewBox="0 0 5 2.8"><path d="M0 0 L2.5 2.8 L5 0" fill="none" stroke="#b0b0b0" stroke-width="0.9" stroke-linecap="round" stroke-linejoin="round"/></svg>
<div class="t " style="top:350px;right:270.00px;font-size:9.5px;letter-spacing:0.166px;color:#1a1a1a">Nr domu</div>
<div class="inp " style="left:720.5px;top:345.87px;width:65px;height:17.5px;"></div>
<div class="t " style="top:373px;right:270.00px;font-size:9.5px;letter-spacing:0.133px;color:#1a1a1a">Nr lokalu</div>
<div class="inp " style="left:720.5px;top:369.14px;width:65px;height:17.5px;"></div>
<div class="t " style="top:397px;right:270.00px;font-size:9.5px;letter-spacing:0.164px;color:#1a1a1a">Powiat</div>
<div class="inp " style="left:720.5px;top:392.41px;width:217.3px;height:17.5px;"></div>
<svg style="left:927.30px;top:400.01px" width="5" height="2.8" viewBox="0 0 5 2.8"><path d="M0 0 L2.5 2.8 L5 0" fill="none" stroke="#b0b0b0" stroke-width="0.9" stroke-linecap="round" stroke-linejoin="round"/></svg>
<div class="t " style="top:420px;right:270.00px;font-size:9.5px;letter-spacing:-0.077px;color:#1a1a1a">Kraj e-Dekl.</div>
<div class="inp " style="left:720.5px;top:415.68px;width:65px;height:17.5px;"></div>
<svg style="left:775.00px;top:423.28px" width="5" height="2.8" viewBox="0 0 5 2.8"><path d="M0 0 L2.5 2.8 L5 0" fill="none" stroke="#b0b0b0" stroke-width="0.9" stroke-linecap="round" stroke-linejoin="round"/></svg>
<div class="t " style="top:443px;right:270.00px;font-size:9.5px;letter-spacing:0.140px;color:#1a1a1a">Kraj wysyłki</div>
<div class="inp " style="left:720.5px;top:438.95px;width:65px;height:17.5px;"></div>
<svg style="left:775.00px;top:446.55px" width="5" height="2.8" viewBox="0 0 5 2.8"><path d="M0 0 L2.5 2.8 L5 0" fill="none" stroke="#b0b0b0" stroke-width="0.9" stroke-linecap="round" stroke-linejoin="round"/></svg>
<div class="ln" style="left:12px;top:529.3px;width:951.5px;background:#e6e6e6"></div>
<svg style="left:14.5px;top:532.5px" width="4" height="6" viewBox="0 0 4 6"><path d="M3.5 0.3 L0.6 3 L3.5 5.7" fill="none" stroke="#d0d0d0" stroke-width="0.8"/></svg>
<div class="a" style="left:22px;top:532px;width:922px;height:7px;border-radius:3.5px;background:#e5e5e5"></div>
<svg style="left:957px;top:532.5px" width="4" height="6" viewBox="0 0 4 6"><path d="M0.5 0.3 L3.4 3 L0.5 5.7" fill="none" stroke="#d0d0d0" stroke-width="0.8"/></svg>
<div class="a" style="left:797px;top:554px;width:80.7px;height:21.5px;background:#0a84ba;border-radius:4px"></div>
<div class="t m" style="top:560px;left:822.70px;font-size:9.5px;letter-spacing:0.215px;color:#fff;">Zapisz</div>
<div class="btn" style="left:883px;top:554px;width:80px;height:21.5px;border-radius:4px"></div>
<div class="t " style="top:560px;left:909.70px;font-size:9.5px;letter-spacing:0.142px;color:#1a1a1a;">Anuluj</div>
</div></body></html>
